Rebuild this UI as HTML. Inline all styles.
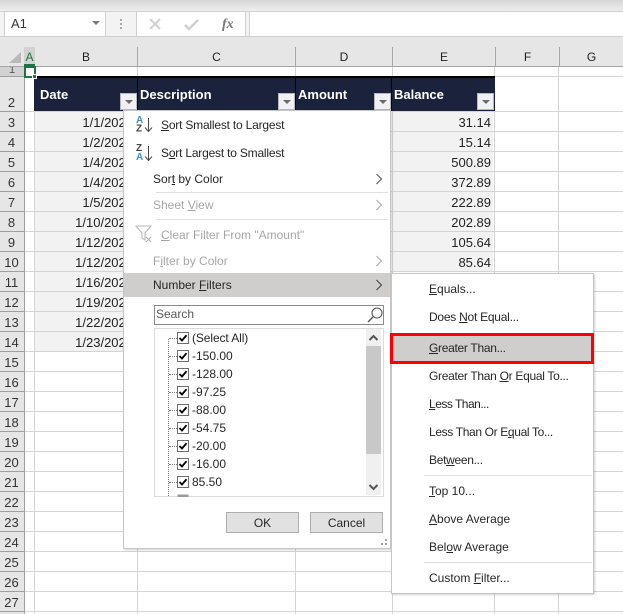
<!DOCTYPE html>
<html><head><meta charset="utf-8">
<style>
html,body{margin:0;padding:0}
body{width:623px;height:614px;overflow:hidden;background:#fff;position:relative;font-family:"Liberation Sans",sans-serif;font-size:12px;color:#262626}
div,span.a,svg.a{position:absolute;box-sizing:border-box}
.t{white-space:nowrap;line-height:16px;height:16px}
.ch{top:47px;height:19px;text-align:center;line-height:20px;font-size:12px;color:#222;border-right:1px solid #a8a8a8}
.rh{left:0;width:24px;height:20px;text-align:center;line-height:21px;font-size:13px;color:#333;border-bottom:1px solid #9f9f9f;padding-right:1px}
.band{height:19px;background:#f2f2f2}
.d{left:35px;width:98px;text-align:right;font-size:13px;line-height:21px;height:20px;color:#222;white-space:nowrap}
.b{left:393px;width:98px;text-align:right;font-size:13px;line-height:21px;height:20px;color:#222;white-space:nowrap}
.hd{top:86px;color:#fff;font-weight:bold;font-size:13px;line-height:18px;white-space:nowrap}
.fb{top:93px;width:17px;height:17px;background:#f1f1f3;border:1px solid #b4b8c4}
.fb:after{content:"";position:absolute;left:4px;top:6px;border-left:4px solid transparent;border-right:4px solid transparent;border-top:4px solid #6a6a6a}
.m{left:153px}.mi{left:161px}
.s{left:429px}
.dis{color:#a6a6a6}
.sep{height:1px;background:#e0e0e0}
.li{left:192px;font-size:12px}
</style></head><body>

<!-- top chrome -->
<div style="left:0;top:0;width:623px;height:12px;background:linear-gradient(#d6d6d6,#f0f0f0)"></div>
<div style="left:0;top:11px;width:623px;height:36px;background:#f3f3f3;border-top:1px solid #d4d4d4"></div>
<div style="left:0;top:36px;width:623px;height:11px;background:#e6e6e6;border-top:1px solid #cfcfcf"></div>
<div style="left:4px;top:11px;width:102px;height:26px;background:#fff;border:1px solid #d0d0d0"></div>
<div class="t" style="left:11px;top:16px;font-size:13px;color:#333">A1</div>
<div style="left:92px;top:21px;border-left:4px solid transparent;border-right:4px solid transparent;border-top:4px solid #777"></div>
<div style="left:120px;top:19px;width:2px;height:2px;background:#aaa;box-shadow:0 4px 0 #aaa,0 8px 0 #aaa"></div>
<div style="left:136px;top:11px;width:110px;height:26px;background:#fff;border:1px solid #d0d0d0"></div>
<svg class="a" style="left:148px;top:16px" width="100" height="16" viewBox="0 0 100 16" fill="none">
<path d="M2 3L12 13M12 3L2 13" stroke="#cfcfcf" stroke-width="2"/>
<path d="M37 9L41 13L50 4" stroke="#cfcfcf" stroke-width="2.4"/>
</svg>
<div class="t" style="left:222px;top:17px;font-family:'Liberation Serif',serif;font-style:italic;font-weight:bold;font-size:14px;color:#777">fx</div>
<div style="left:249px;top:11px;width:374px;height:26px;background:#fff;border:1px solid #d0d0d0;border-right:0"></div>

<!-- headers -->
<div style="left:0;top:47px;width:623px;height:19px;background:#e6e6e6"></div>
<svg class="a" style="left:8px;top:51px" width="14" height="13"><path d="M13 1V12H1Z" fill="#b9b9b9"/></svg>
<div style="left:24px;top:47px;width:11px;height:19px;background:#d2d2d2;color:#217346;font-size:12px;line-height:20px;text-align:center;border-bottom:2px solid #217346">A</div>
<div class="ch" style="left:35px;width:103px">B</div>
<div class="ch" style="left:138px;width:158px">C</div>
<div class="ch" style="left:296px;width:97px">D</div>
<div class="ch" style="left:393px;width:103px">E</div>
<div class="ch" style="left:496px;width:64px">F</div>
<div class="ch" style="left:560px;width:63px;border-right:0">G</div>
<div style="left:0;top:66px;width:623px;height:1px;background:#a4a4a4"></div>

<!-- row header column -->
<div style="left:0;top:67px;width:24px;height:547px;background:#e6e6e6"></div>
<div style="left:24px;top:66px;width:1px;height:548px;background:#9f9f9f"></div>
<div style="left:0;top:67px;width:24px;height:10px;background:#d2d2d2;overflow:hidden;font-size:11px;line-height:6px;text-align:center;color:#555;border-bottom:1px solid #9f9f9f">1</div>
<div class="rh" style="top:77px;height:35px;line-height:51px">2</div>
<div class="rh" style="top:112px">3</div><div class="rh" style="top:132px">4</div><div class="rh" style="top:152px">5</div>
<div class="rh" style="top:172px">6</div><div class="rh" style="top:192px">7</div><div class="rh" style="top:212px">8</div>
<div class="rh" style="top:232px">9</div><div class="rh" style="top:252px">10</div><div class="rh" style="top:272px">11</div>
<div class="rh" style="top:292px">12</div><div class="rh" style="top:312px">13</div><div class="rh" style="top:332px">14</div>
<div class="rh" style="top:352px">15</div><div class="rh" style="top:372px">16</div><div class="rh" style="top:392px">17</div>
<div class="rh" style="top:412px">18</div><div class="rh" style="top:432px">19</div><div class="rh" style="top:452px">20</div>
<div class="rh" style="top:472px">21</div><div class="rh" style="top:492px">22</div><div class="rh" style="top:512px">23</div>
<div class="rh" style="top:532px">24</div><div class="rh" style="top:552px">25</div><div class="rh" style="top:572px">26</div>
<div class="rh" style="top:592px">27</div>

<!-- gridlines -->
<div style="left:25px;top:112px;width:598px;height:502px;background:repeating-linear-gradient(to bottom,transparent 0,transparent 19px,#d4d4d4 19px,#d4d4d4 20px)"></div>
<div style="left:25px;top:111px;width:598px;height:1px;background:#d4d4d4"></div>
<div style="left:25px;top:76px;width:598px;height:1px;background:#d4d4d4"></div>
<div style="left:34px;top:67px;width:1px;height:547px;background:#d4d4d4"></div>
<div style="left:137px;top:67px;width:1px;height:547px;background:#d4d4d4"></div>
<div style="left:295px;top:67px;width:1px;height:547px;background:#d4d4d4"></div>
<div style="left:392px;top:67px;width:1px;height:547px;background:#d4d4d4"></div>
<div style="left:494px;top:67px;width:1px;height:547px;background:#d4d4d4"></div>
<div style="left:558px;top:67px;width:1px;height:547px;background:#d4d4d4"></div>

<!-- table bands -->
<div class="band" style="left:35px;top:112px;width:102px"></div><div class="band" style="left:35px;top:132px;width:102px"></div>
<div class="band" style="left:35px;top:152px;width:102px"></div><div class="band" style="left:35px;top:172px;width:102px"></div>
<div class="band" style="left:35px;top:192px;width:102px"></div><div class="band" style="left:35px;top:212px;width:102px"></div>
<div class="band" style="left:35px;top:232px;width:102px"></div><div class="band" style="left:35px;top:252px;width:102px"></div>
<div class="band" style="left:35px;top:272px;width:102px"></div><div class="band" style="left:35px;top:292px;width:102px"></div>
<div class="band" style="left:35px;top:312px;width:102px"></div><div class="band" style="left:35px;top:332px;width:102px"></div>
<div class="band" style="left:393px;top:112px;width:100px"></div><div class="band" style="left:393px;top:132px;width:100px"></div>
<div class="band" style="left:393px;top:152px;width:100px"></div><div class="band" style="left:393px;top:172px;width:100px"></div>
<div class="band" style="left:393px;top:192px;width:100px"></div><div class="band" style="left:393px;top:212px;width:100px"></div>
<div class="band" style="left:393px;top:232px;width:100px"></div><div class="band" style="left:393px;top:252px;width:100px"></div>

<div class="d" style="top:112px">1/1/2021</div><div class="d" style="top:132px">1/2/2021</div>
<div class="d" style="top:152px">1/4/2021</div><div class="d" style="top:172px">1/4/2021</div>
<div class="d" style="top:192px">1/5/2021</div><div class="d" style="top:212px">1/10/2021</div>
<div class="d" style="top:232px">1/12/2021</div><div class="d" style="top:252px">1/12/2021</div>
<div class="d" style="top:272px">1/16/2021</div><div class="d" style="top:292px">1/19/2021</div>
<div class="d" style="top:312px">1/22/2021</div><div class="d" style="top:332px">1/23/2021</div>

<div class="b" style="top:112px">31.14</div><div class="b" style="top:132px">15.14</div>
<div class="b" style="top:152px">500.89</div><div class="b" style="top:172px">372.89</div>
<div class="b" style="top:192px">222.89</div><div class="b" style="top:212px">202.89</div>
<div class="b" style="top:232px">105.64</div><div class="b" style="top:252px">85.64</div>

<!-- table header -->
<div style="left:34px;top:76px;width:461px;height:35px;background:#1a233b;border-top:2px solid #000"></div>
<div style="left:137px;top:76px;width:1px;height:35px;background:#000"></div>
<div style="left:295px;top:76px;width:1px;height:35px;background:#000"></div>
<div style="left:391px;top:76px;width:1px;height:35px;background:#000"></div>
<div class="hd" style="left:40px">Date</div>
<div class="hd" style="left:140px">Description</div>
<div class="hd" style="left:298px">Amount</div>
<div class="hd" style="left:394px">Balance</div>
<div class="fb" style="left:120px"></div>
<div class="fb" style="left:278px"></div>
<div class="fb" style="left:374px"></div>
<div class="fb" style="left:477px"></div>

<!-- active cell -->
<div style="left:24px;top:66px;width:12px;height:12px;border:2px solid #217346"></div>
<div style="left:32px;top:74px;width:5px;height:5px;background:#217346;border:1px solid #fff"></div>

<!-- main menu -->
<div style="left:123px;top:110px;width:268px;height:439px;background:#fff;border:1px solid #c6c6c6;box-shadow:1px 1px 2px rgba(0,0,0,.18)"></div>
<svg class="a" style="left:134px;top:113px" width="22" height="50" viewBox="0 0 22 50" fill="none">
<text x="2" y="10" font-family="Liberation Sans" font-weight="bold" font-size="10" fill="#3b8fd4">A</text>
<text x="2" y="18.5" font-family="Liberation Sans" font-weight="bold" font-size="10" fill="#444">Z</text>
<path d="M14.5 5V18M11 14.5L14.5 18.5L18 14.5" stroke="#444"/>
<text x="2" y="38" font-family="Liberation Sans" font-weight="bold" font-size="10" fill="#444">Z</text>
<text x="2" y="47" font-family="Liberation Sans" font-weight="bold" font-size="10" fill="#3b8fd4">A</text>
<path d="M14.5 33V47M11 43.5L14.5 47.5L18 43.5" stroke="#444"/>
</svg>
<div class="t mi" style="top:117px;letter-spacing:-.2px"><u>S</u>ort Smallest to Largest</div>
<div class="t mi" style="top:145px;letter-spacing:-.2px">S<u>o</u>rt Largest to Smallest</div>
<div class="t m" style="top:171px">Sor<u>t</u> by Color</div>
<svg class="a" style="left:375px;top:173px" width="8" height="12" fill="none"><path d="M1.5 1L6.5 6L1.5 11" stroke="#555" stroke-width="1.1"/></svg>
<div class="sep" style="left:156px;top:192px;width:232px"></div>
<div class="t m dis" style="top:197px">Sheet <u>V</u>iew</div>
<svg class="a" style="left:375px;top:199px" width="8" height="12" fill="none"><path d="M1.5 1L6.5 6L1.5 11" stroke="#aaa" stroke-width="1.1"/></svg>
<div class="sep" style="left:156px;top:219px;width:232px"></div>
<svg class="a" style="left:135px;top:225px" width="20" height="20" fill="none">
<path d="M1 1H16L10 8V15L7 13V8Z" stroke="#b8b8b8" stroke-width="1.1"/>
<path d="M11 12L16 17M16 12L11 17" stroke="#b4b4b4" stroke-width="1.2"/>
</svg>
<div class="t mi dis" style="top:227px"><u>C</u>lear Filter From "Amount"</div>
<div class="t m dis" style="top:253px">F<u>i</u>lter by Color</div>
<svg class="a" style="left:375px;top:255px" width="8" height="12" fill="none"><path d="M1.5 1L6.5 6L1.5 11" stroke="#aaa" stroke-width="1.1"/></svg>
<div style="left:124px;top:273px;width:266px;height:24px;background:#cfcecc"></div>
<div class="t m" style="top:277px">Number <u>F</u>ilters</div>
<svg class="a" style="left:375px;top:279px" width="8" height="12" fill="none"><path d="M1.5 1L6.5 6L1.5 11" stroke="#444" stroke-width="1.1"/></svg>

<!-- search -->
<div style="left:154px;top:305px;width:230px;height:20px;border:1px solid #8a8a8a;background:#fff"></div>
<div class="t" style="left:156px;top:306px;color:#555">Search</div>
<svg class="a" style="left:367px;top:305px" width="17" height="19" fill="none"><circle cx="10" cy="8" r="5" stroke="#555" stroke-width="1.1"/><path d="M6 12L1 17" stroke="#555" stroke-width="1.4"/></svg>

<!-- list -->
<div style="left:154px;top:328px;width:230px;height:169px;border:1px solid #dcdcdc;overflow:hidden;background:#fff"></div>
<div style="left:168px;top:339px;width:1px;height:157px;border-left:1px dotted #777"></div>
<div style="left:169px;top:338px;width:8px;border-top:1px dotted #777"></div>
<div style="left:169px;top:356px;width:8px;border-top:1px dotted #777"></div>
<div style="left:169px;top:374px;width:8px;border-top:1px dotted #777"></div>
<div style="left:169px;top:392px;width:8px;border-top:1px dotted #777"></div>
<div style="left:169px;top:410px;width:8px;border-top:1px dotted #777"></div>
<div style="left:169px;top:428px;width:8px;border-top:1px dotted #777"></div>
<div style="left:169px;top:446px;width:8px;border-top:1px dotted #777"></div>
<div style="left:169px;top:464px;width:8px;border-top:1px dotted #777"></div>
<div style="left:169px;top:482px;width:8px;border-top:1px dotted #777"></div>
<svg class="a" style="left:177px;top:332px" width="12" height="165" fill="#fff" stroke="none">
<g><rect x=".5" y=".5" width="11" height="11" stroke="#6e6e6e"/><path d="M2.5 6L5 8.5L9.5 3.2" fill="none" stroke="#000" stroke-width="1.8"/></g>
<g transform="translate(0,18)"><rect x=".5" y=".5" width="11" height="11" stroke="#6e6e6e"/><path d="M2.5 6L5 8.5L9.5 3.2" fill="none" stroke="#000" stroke-width="1.8"/></g>
<g transform="translate(0,36)"><rect x=".5" y=".5" width="11" height="11" stroke="#6e6e6e"/><path d="M2.5 6L5 8.5L9.5 3.2" fill="none" stroke="#000" stroke-width="1.8"/></g>
<g transform="translate(0,54)"><rect x=".5" y=".5" width="11" height="11" stroke="#6e6e6e"/><path d="M2.5 6L5 8.5L9.5 3.2" fill="none" stroke="#000" stroke-width="1.8"/></g>
<g transform="translate(0,72)"><rect x=".5" y=".5" width="11" height="11" stroke="#6e6e6e"/><path d="M2.5 6L5 8.5L9.5 3.2" fill="none" stroke="#000" stroke-width="1.8"/></g>
<g transform="translate(0,90)"><rect x=".5" y=".5" width="11" height="11" stroke="#6e6e6e"/><path d="M2.5 6L5 8.5L9.5 3.2" fill="none" stroke="#000" stroke-width="1.8"/></g>
<g transform="translate(0,108)"><rect x=".5" y=".5" width="11" height="11" stroke="#6e6e6e"/><path d="M2.5 6L5 8.5L9.5 3.2" fill="none" stroke="#000" stroke-width="1.8"/></g>
<g transform="translate(0,126)"><rect x=".5" y=".5" width="11" height="11" stroke="#6e6e6e"/><path d="M2.5 6L5 8.5L9.5 3.2" fill="none" stroke="#000" stroke-width="1.8"/></g>
<g transform="translate(0,144)"><rect x=".5" y=".5" width="11" height="11" stroke="#6e6e6e"/><path d="M2.5 6L5 8.5L9.5 3.2" fill="none" stroke="#000" stroke-width="1.8"/></g>
<rect x=".5" y="162.5" width="11" height="3" fill="#999"/>
</svg>
<div class="t li" style="top:330px;letter-spacing:-.1px">(Select All)</div>
<div class="t li" style="top:348px">-150.00</div>
<div class="t li" style="top:366px">-128.00</div>
<div class="t li" style="top:384px">-97.25</div>
<div class="t li" style="top:402px">-88.00</div>
<div class="t li" style="top:420px">-54.75</div>
<div class="t li" style="top:438px">-20.00</div>
<div class="t li" style="top:456px">-16.00</div>
<div class="t li" style="top:474px">85.50</div>
<!-- scrollbar -->
<div style="left:366px;top:329px;width:15px;height:166px;background:#f0f0f0"></div>
<div style="left:366px;top:346px;width:15px;height:108px;background:#c8c8c8"></div>
<svg class="a" style="left:366px;top:332px" width="15" height="12" fill="none"><path d="M3.5 8L7.5 4L11.5 8" stroke="#555" stroke-width="2"/></svg>
<svg class="a" style="left:366px;top:481px" width="15" height="12" fill="none"><path d="M3.5 4L7.5 8L11.5 4" stroke="#555" stroke-width="2"/></svg>

<!-- buttons -->
<div style="left:226px;top:512px;width:73px;height:21px;background:#e1e1e1;border:1px solid #adadad;text-align:center;line-height:20px">OK</div>
<div style="left:310px;top:512px;width:73px;height:21px;background:#e1e1e1;border:1px solid #adadad;text-align:center;line-height:20px">Cancel</div>
<svg class="a" style="left:380px;top:539px" width="8" height="8" fill="#a0a0a0"><rect x="5" y="0" width="2" height="2"/><rect x="1" y="4" width="2" height="2"/><rect x="5" y="4" width="2" height="2"/></svg>

<!-- sub menu -->
<div style="left:391px;top:273px;width:203px;height:321px;background:#fff;border:1px solid #c6c6c6;box-shadow:1px 1px 2px rgba(0,0,0,.18)"></div>
<div class="t s" style="top:281px"><u>E</u>quals...</div>
<div class="t s" style="top:309px;letter-spacing:-.25px">Does <u>N</u>ot Equal...</div>
<div style="left:390px;top:333px;width:204px;height:31px;background:#cfcecc;border:3px solid #f00"></div>
<div class="t s" style="top:340px;letter-spacing:-.3px"><u>G</u>reater Than...</div>
<div class="t s" style="top:368px;letter-spacing:-.3px">Greater Than <u>O</u>r Equal To...</div>
<div class="t s" style="top:396px;letter-spacing:-.5px"><u>L</u>ess Than...</div>
<div class="t s" style="top:424px;letter-spacing:-.35px">Less Than Or E<u>q</u>ual To...</div>
<div class="t s" style="top:452px;letter-spacing:-.3px">Bet<u>w</u>een...</div>
<div class="sep" style="left:424px;top:475px;width:168px"></div>
<div class="t s" style="top:483px"><u>T</u>op 10...</div>
<div class="t s" style="top:511px"><u>A</u>bove Average</div>
<div class="t s" style="top:539px">Bel<u>o</u>w Average</div>
<div class="sep" style="left:424px;top:562px;width:168px"></div>
<div class="t s" style="top:570px">Custom <u>F</u>ilter...</div>

</body></html>
